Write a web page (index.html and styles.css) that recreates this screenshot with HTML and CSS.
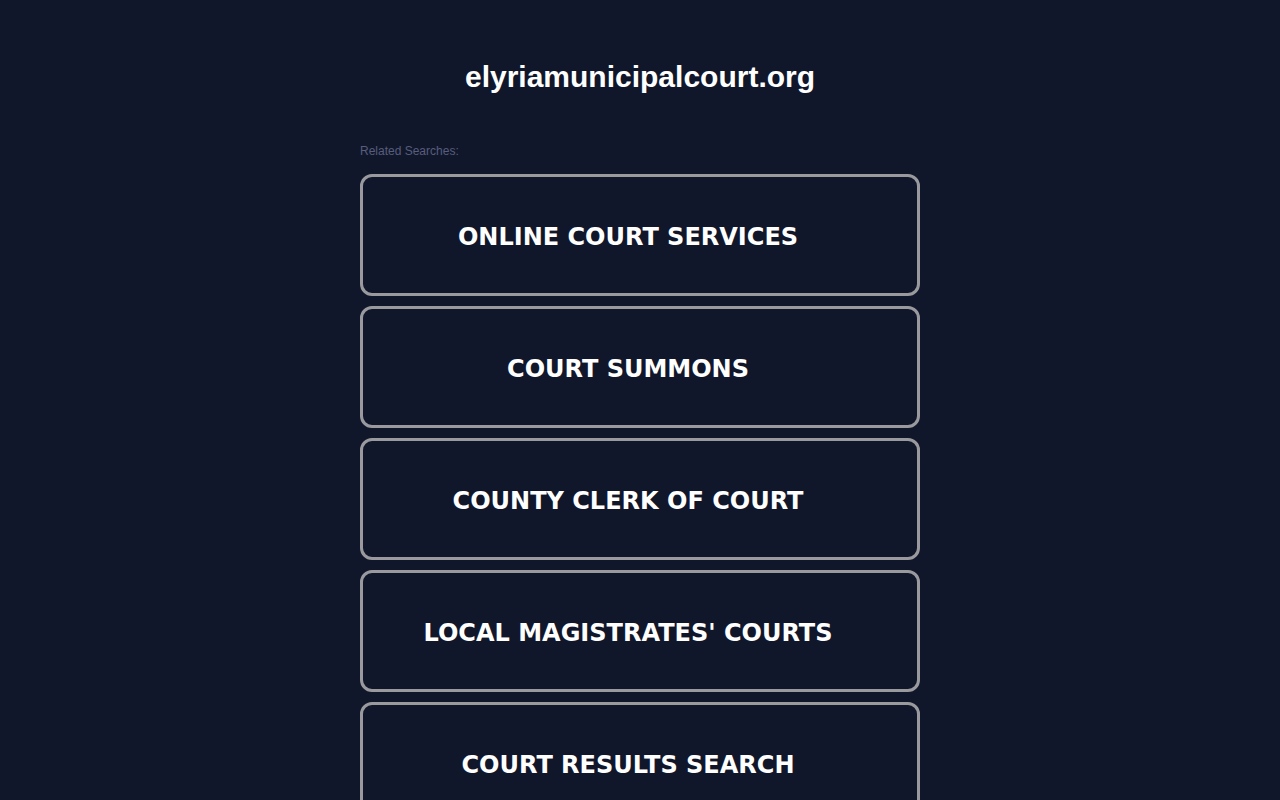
FILE: index.html
```html
<!DOCTYPE html>
<html lang="en">
<head>
    <meta charset="UTF-8">
    <meta name="viewport" content="width=device-width, initial-scale=1.0">
    <title>elyriamunicipalcourt.org</title>
    <link rel="stylesheet" href="styles.css">
</head>
<body>
    <div class="wrap">
        <h1 class="domain">elyriamunicipalcourt.org</h1>
        <p class="label">Related Searches:</p>
        <ul class="links">
            <li><a href="#">ONLINE COURT SERVICES</a></li>
            <li><a href="#">COURT SUMMONS</a></li>
            <li><a href="#">COUNTY CLERK OF COURT</a></li>
            <li><a href="#">LOCAL MAGISTRATES' COURTS</a></li>
            <li><a href="#">COURT RESULTS SEARCH</a></li>
        </ul>
    </div>
</body>
</html>
```

FILE: styles.css
```css
* {
    padding: 0;
    margin: 0;
}
body {
    background: #11172b;
    font-family: "Liberation Sans", Arial, sans-serif;
}
.wrap {
    width: 560px;
    margin: 0 auto;
    padding-top: 58px;
}
.domain {
    font-size: 30px;
    line-height: 38px;
    color: #fff;
    text-align: center;
}
.label {
    margin-top: 48px;
    font-size: 12px;
    line-height: 14px;
    color: #575d7c;
}
.links {
    list-style: none;
    margin-top: 16px;
}
.links li {
    margin-bottom: 10px;
}
.links a {
    display: flex;
    align-items: center;
    justify-content: center;
    height: 122px;
    padding: 4px 24px 0 0;
    box-sizing: border-box;
    border: 3px solid #9a9a9e;
    border-radius: 12px;
    font-family: "DejaVu Sans", Verdana, sans-serif;
    font-weight: bold;
    font-size: 24px;
    color: #fff;
    text-decoration: none;
}
```
